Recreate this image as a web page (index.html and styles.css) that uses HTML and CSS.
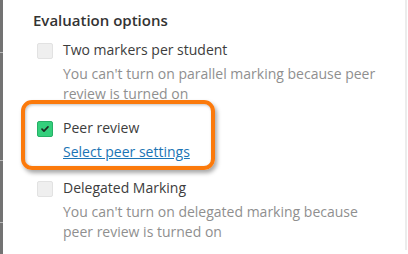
FILE: index.html
```html
<!DOCTYPE html>
<html>
<head>
<meta charset="utf-8">
<link rel="stylesheet" href="styles.css">
</head>
<body>
<div class="page">
  <div class="edge">
    <span class="frag f1"></span>
    <span class="frag f2"></span>
    <span class="frag f3"></span>
  </div>
  <div class="panel">
    <h3 class="title">Evaluation options</h3>
    <div class="option">
      <span class="cb"></span>
      <div class="body">
        <div class="label">Two markers per student</div>
        <div class="help">You can't turn on parallel marking because peer review is turned on</div>
      </div>
    </div>
    <div class="option">
      <span class="cb checked">
        <svg viewBox="0 0 16 16" width="12" height="12"><path d="M4 8.2l2.6 2.6L12 5.2" fill="none" stroke="#1d2a22" stroke-width="2.2" stroke-linecap="round" stroke-linejoin="round"/></svg>
      </span>
      <div class="body">
        <div class="label">Peer review</div>
        <a class="link" href="#">Select peer settings</a>
      </div>
    </div>
    <div class="option">
      <span class="cb"></span>
      <div class="body">
        <div class="label">Delegated Marking</div>
        <div class="help">You can't turn on delegated marking because peer review is turned on</div>
      </div>
    </div>
  </div>
  <div class="rightline"></div>
  <div class="highlight"></div>
</div>
</body>
</html>
```
FILE: styles.css
```css
html, body {
  margin: 0;
  padding: 0;
  background: #fff;
}
.page {
  position: relative;
  width: 408px;
  height: 254px;
  display: flex;
  overflow: hidden;
  font-family: "Open Sans", "Noto Sans", sans-serif;
}
.edge {
  position: relative;
  width: 3px;
  background: #737373;
  flex: none;
}
.frag {
  position: absolute;
  left: 0;
  width: 3px;
  height: 1px;
  background: #b9b9b9;
}
.f1 { top: 52px; }
.f2 { top: 160px; }
.f3 { top: 222px; }
.panel {
  flex: 1;
  padding: 10px 0 0 30px;
}
.title {
  margin: 0 0 10px 0;
  font-size: 15px;
  line-height: 20px;
  font-weight: 600;
  color: #333;
}
.option {
  display: flex;
  gap: 10px;
  padding-left: 4px;
  margin-bottom: 14px;
}
.option:nth-child(3) { margin-bottom: 16px; }
.cb {
  flex: none;
  width: 14px;
  height: 14px;
  margin-top: 3px;
  border: 1px solid #e2e2e2;
  border-radius: 2px;
  background: #efefef;
  display: flex;
  align-items: center;
  justify-content: center;
}
.cb.checked {
  background: #34cf7c;
  border-color: #26b066;
}
.body {
  font-size: 14px;
  line-height: 20px;
}
.label {
  color: #3d3d3d;
  margin-bottom: 4px;
}
.help {
  color: #8f8f8f;
  width: 320px;
}
.link {
  color: #1b75b5;
  text-decoration: underline;
}
.rightline {
  position: absolute;
  right: 1px;
  top: 0;
  bottom: 4px;
  width: 2px;
  background: #ececec;
}
.highlight {
  position: absolute;
  left: 21px;
  top: 100px;
  width: 186px;
  height: 62px;
  border: 4px solid #fb7a0c;
  border-radius: 11px;
  box-shadow: 2px 3px 4px rgba(0, 0, 0, 0.35), inset 1px 1px 3px rgba(0, 0, 0, 0.25);
}
```
